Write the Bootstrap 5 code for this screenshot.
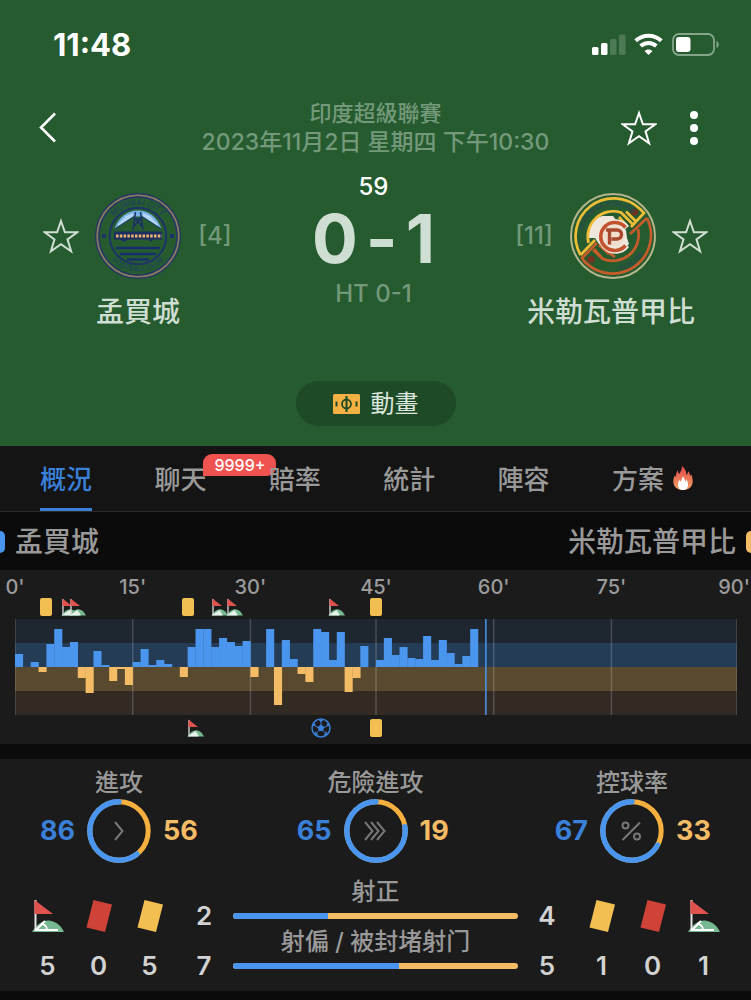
<!DOCTYPE html>
<html lang="zh-Hant" data-bs-theme="dark">
<head>
<meta charset="utf-8">
<meta name="viewport" content="width=device-width, initial-scale=1">
<title>孟買城 0-1 米勒瓦普甲比</title>
<link href="https://cdn.jsdelivr.net/npm/bootstrap@5.3.0/dist/css/bootstrap.min.css" rel="stylesheet">
<style>
:root{--pitch:#265b2f;--home:#4a96ee;--home-text:#3a7fd8;--away:#f5bc66;--panel:#1b1b1b;--muted:#999}
body{background:#0b0b0b;color:var(--muted);font-family:Inter,"Noto Sans CJK TC",sans-serif;font-size:24px;line-height:26px;font-weight:500;overflow-x:hidden}
svg{display:block;flex:none}
.plain{background:none;border:0;padding:0;color:inherit}
.match-head{background:var(--pitch);color:#cfded2;padding-bottom:20px}
.status{padding:27px 31px 0 53px;height:63px;color:#fff}
.clock{font-size:31px;font-weight:700}
.topbar{padding:0 52px 0 38px;margin-top:36px;color:#fff}
.nav-start{width:114px}
.nav-end{width:100px}
.league{color:#73997a;font-size:22px;line-height:29px}
.league time{font-size:23px}
.board{padding:0 43px;margin-top:15px}
.side{display:grid;justify-items:center;align-items:center;column-gap:16px;row-gap:16px;margin-top:21px}
.side-home{grid-template-columns:36px 86px 36px}
.side-away{grid-template-columns:40px 86px 36px}
.side h2{grid-column:1/-1;font-size:28px;line-height:34px;font-weight:500;margin:0;white-space:nowrap;color:#cfded2}
.rank{color:#73997a;font-size:24px}
.minute{font-size:24px;line-height:30px;color:#fff}
.score{font-size:68px;line-height:72px;font-weight:700;gap:8px}
.half{color:#73997a;font-size:24px;line-height:40px}
.anim{background:#1e4a27;color:#dbe6dd;border-radius:23px;width:160px;height:45px;margin-top:52px;gap:11px}
.tabs{background:#141414;border-bottom:1px solid #2b2b2b;padding:0 58px 0 40px}
.tabs a{color:var(--muted);font-size:26px;height:65px;padding-top:2px;text-decoration:none;gap:9px}
.tabs a.active{color:var(--home-text);box-shadow:inset 0 -3px var(--home-text)}
.count{left:49px;top:8px;width:73px;height:22px;line-height:22px;font-size:16px;background:#ef5350;color:#fff;border-radius:9px 9px 9px 0;text-align:center}
.legend-row{font-size:28px;height:58px;padding-top:2px}
.legend-row span{gap:10px}
.swatch{width:5px;height:22px}
.timeline{background:var(--panel);padding:4px 14px 0 15px;height:174px;overflow:hidden}
.lane{display:grid;grid-template-columns:repeat(92,minmax(0,1fr));align-items:center}
.lane>*{grid-row:1;width:0;display:flex;justify-content:center;white-space:nowrap}
.axis{height:24px;font-size:20px;color:#9b9b9b}
.axis>:last-child{justify-content:flex-end;margin-right:-13px}
.lane-top{height:18px}
.lane-bottom{height:26px}
.booking{width:12px;height:18px;border-radius:2px;background:#f3bf52;flex:none}
.plot{height:96px;width:100%;margin-top:3px}
.panel{background:var(--panel);margin-top:15px;padding-top:11px}
.dials{padding:0 39px}
.dial{width:160px}
.dial-row{display:grid;grid-template-columns:1fr 64px 1fr;column-gap:12px;align-items:center;font-size:27px;font-weight:700;margin-top:3px}
.h-num{color:var(--home-text)}
.a-num{color:var(--away)}
.tally{padding:0 22px;margin-top:16px;color:#d2d2d2}
.tcol{width:51px;font-size:26px;font-weight:600}
.tcol.wide{width:58px}
.tcol>*{height:50px;display:flex;align-items:center;justify-content:center}
.bars{color:var(--muted);text-align:center;padding-bottom:12px}
.progress{height:6px;border-radius:3px;background:var(--away);margin:8px 0 10px}
.progress-bar{background:var(--home)}
</style>
</head>
<body>
<svg width="0" height="0" class="position-absolute" aria-hidden="true">
  <symbol id="star" viewBox="0 0 36 36"><path d="M18 3l3.900 11.300h12.400l-9.800 7.100 3.600 11.900L18 26.200 7.900 33.300l3.600-11.900-9.800-7.100h12.400z" fill="none" stroke="currentColor" stroke-width="2"/></symbol>
  <symbol id="corner" viewBox="0 0 34 34"><path d="M1 33c5-8 12-13 19-11 6 1 11 6 13 11z" fill="#76b88f"/><path d="M4.500 1v31" stroke="#e3e3e3" stroke-width="2"/><path d="M3.500 1L22 15H3.500z" fill="#e0524d"/><path d="M4 31h23M5 31l9-9M10 25c4 0 6 3 6 6" fill="none" stroke="#fff" stroke-width="2"/></symbol>
  <symbol id="corner-sm" viewBox="0 0 17 18"><path d="M.5 17.500c3-5 7-7 10-6 3 .6 5 3 6.500 6z" fill="#76b88f"/><path d="M.5 17.500l8-5.500 3 4.500v1z" fill="#e6f2ea"/><path d="M2 1v16" stroke="#ddd" stroke-width="1.300"/><path d="M1.500 .5l9.500 7.500H1.500z" fill="#e0524d"/></symbol>
  <symbol id="tilted" viewBox="0 0 28 34"><path d="M8.500 1L27 5.500 20 33 1.500 28.500z" fill="currentColor"/></symbol>
</svg>

<header class="match-head">
  <div class="status d-flex align-items-center justify-content-between">
    <span class="clock">11:48</span>
    <svg width="129" height="26" viewBox="0 0 129 26" role="img" aria-label="訊號、Wi-Fi、電量">
      <g fill="#fff"><rect x="1" y="15" width="6.500" height="8" rx="1.500"/><rect x="10" y="11" width="6.500" height="12" rx="1.500"/><g opacity=".18"><rect x="19" y="7" width="6.500" height="16" rx="1.500"/><rect x="28" y="2.500" width="6.500" height="20.500" rx="1.500"/></g>
      <path d="M57.500 17.500c1.600 0 3 .6 4 1.500l-4 4-4-4c1-.9 2.400-1.500 4-1.500z"/></g>
      <path d="M44.700 8.800a18.500 18.500 0 0 1 25.600 0M49.700 14a11.500 11.500 0 0 1 15.600 0" fill="none" stroke="#fff" stroke-width="4"/>
      <rect x="82" y="2" width="41" height="21" rx="6" fill="none" stroke="#86a58b" stroke-width="1.800"/><rect x="85" y="5" width="14.500" height="15" rx="3" fill="#fff"/><path d="M125.500 9c3 1 3 6 0 7z" fill="#86a58b"/>
    </svg>
  </div>

  <div class="topbar d-flex align-items-center justify-content-between">
    <div class="nav-start d-flex"><button class="plain" type="button" aria-label="返回"><svg width="20" height="32" viewBox="0 0 20 32"><path d="M17 1.500L3 15.500l14 14" fill="none" stroke="#fff" stroke-width="2.600"/></svg></button></div>
    <p class="league text-center text-nowrap mb-0">印度超級聯賽<br><time datetime="2023-11-02T22:30">2023年11月2日 星期四 下午10:30</time></p>
    <div class="nav-end d-flex align-items-center justify-content-end">
      <button class="plain me-4 pe-1" type="button" aria-label="收藏比賽"><svg width="36" height="36"><use href="#star"/></svg></button>
      <button class="plain" type="button" aria-label="更多"><svg width="14" height="36" viewBox="0 0 14 36" fill="#fff"><circle cx="9" cy="5" r="4"/><circle cx="9" cy="18" r="4"/><circle cx="9" cy="31" r="4"/></svg></button>
    </div>
  </div>

  <div class="board d-flex justify-content-between align-items-start">
    <section class="side side-home">
      <button class="plain" type="button" aria-label="收藏孟買城"><svg width="36" height="36"><use href="#star"/></svg></button>
      <svg width="86" height="86" viewBox="0 0 86 86" role="img" aria-label="孟買城隊徽">
        <defs><path id="m-up" d="M12 43a31 31 0 0 1 62 0"/><path id="m-dn" d="M7.500 43a35.500 35.500 0 0 0 71 0"/></defs>
        <circle cx="43" cy="43" r="42.300" fill="none" stroke="#23366b" stroke-width="1.400"/><circle cx="43" cy="43" r="40.700" fill="none" stroke="#8d7862" stroke-width="1.800"/><circle cx="43" cy="43" r="39" fill="none" stroke="#23366b" stroke-width="1.400"/><circle cx="43" cy="43" r="28.300" fill="none" stroke="#1e3468" stroke-width="2"/>
        <g fill="#1f4458" font-size="8" font-weight="600"><text text-anchor="middle"><textPath href="#m-up" startOffset="50%">MUMBAI CITY</textPath></text><text font-size="7" text-anchor="middle"><textPath href="#m-dn" startOffset="50%">FOOTBALL CLUB</textPath></text></g>
        <path d="M7 41h4v4H7zM75 41h4v4h-4z" fill="#1c3167"/>
        <path d="M19.500 35.500C24 24 32 17.500 43 17.500s19 6.500 23.500 18L47 23.500h-8z" fill="#79b2e6"/><path d="M23 31l8-8 7-3v3L23 33zM63 31l-8-8-7-3v3l15 10z" fill="#b6d5ef"/>
        <path d="M38 37l2.500-18M48 37l-2.500-18M39.500 26h7M38 34l8-8M48 34l-8-8" fill="none" stroke="#1c3167" stroke-width="1.500"/><path d="M20 36l19-12.500M66 36L47 23.500" stroke="#1c3a62" stroke-width="1"/>
        <path d="M19 38.500h48v8H59l-3 2-3-2H32l-3 2.500-4-2.500h-6z" fill="#1c2f62"/><path d="M21 43h46" stroke="#efb56b" stroke-width="3" stroke-dasharray="2.500 1.300"/>
        <path d="M21 55h44M25 61h36M32 66.500h22" stroke="#17306b" stroke-width="2.600"/>
      </svg>
      <span class="rank">[4]</span>
      <h2>孟買城</h2>
    </section>

    <div class="text-center">
      <div class="minute">59</div>
      <div class="score d-flex justify-content-center"><span>0</span><span>-</span><span>1</span></div>
      <div class="half">HT 0-1</div>
    </div>

    <section class="side side-away">
      <span class="rank">[11]</span>
      <svg width="86" height="86" viewBox="0 0 86 86" role="img" aria-label="米勒瓦普甲比隊徽">
        <defs><path id="p-up" d="M13 43a30 30 0 0 1 60 0"/><path id="p-dn" d="M7.500 43a35.500 35.500 0 0 0 71 0"/></defs>
        <circle cx="43" cy="43" r="42" fill="none" stroke="#b3b58d" stroke-width="2"/>
        <path d="M19 38c1-8 6-13 13-15l11 0 6 8 7 6 1 8 2 6-5 5-11 2-12-4-6-9-6 0z" fill="#efe7dc"/>
        <g fill="none" stroke-width="2.700">
          <path d="M10.500 62A38 38 0 0 1 70 16l4 4L61 34M10.500 62L25 47M18.500 50A25.500 25.500 0 0 1 51 19.500l12 12M49 24l7 8M56 18.500l10 10" stroke="#efbd38"/>
          <path d="M77 25A38.500 38.500 0 0 1 15 69l-3-4 15-15M77 25L60 41M68 36A26 26 0 0 1 33 66l-10-9M29 52l10 9M24 56l9 10M35 57l10 7" stroke="#c75c2b"/>
        </g>
        <path d="M56.500 35A14 14 0 1 0 56.500 52" fill="none" stroke="#efe7dc" stroke-width="6.500"/>
        <path d="M55.500 34.500A14 14 0 1 0 55.500 52.500" fill="none" stroke="#c3522f" stroke-width="3.600"/>
        <circle cx="44" cy="43" r="10.500" fill="#f0dfcd"/>
        <path d="M39.500 51.500V37H47a4.500 4.500 0 0 1 0 9h-5.500M36 37h6" fill="none" stroke="#a8482f" stroke-width="3.400"/>
        <circle cx="64.500" cy="19" r="3.600" fill="#75321f"/><circle cx="21" cy="66.500" r="3.600" fill="#75321f"/>
        <g fill="#284b49" font-size="7" font-weight="700"><text text-anchor="middle"><textPath href="#p-up" startOffset="40%">MINERVA PUNJAB</textPath></text><text text-anchor="middle"><textPath href="#p-dn" startOffset="70%">PUNJAB</textPath></text></g>
      </svg>
      <button class="plain" type="button" aria-label="收藏米勒瓦普甲比"><svg width="36" height="36"><use href="#star"/></svg></button>
      <h2>米勒瓦普甲比</h2>
    </section>
  </div>

  <button class="plain anim d-flex align-items-center justify-content-center mx-auto" type="button">
    <svg width="27" height="20" viewBox="0 0 27 20"><rect width="27" height="20" rx="1.500" fill="#f3b043"/><path d="M3.500 7.500v5M23.500 7.500v5M13.500 2v16" stroke="#1e4a27" stroke-width="2"/><circle cx="13.500" cy="10" r="4.500" fill="none" stroke="#1e4a27" stroke-width="1.800"/></svg>動畫
  </button>
</header>

<nav class="tabs d-flex justify-content-between" aria-label="比賽資訊">
  <a class="active position-relative d-flex align-items-center" href="#overview" aria-current="page">概況</a>
  <a class="position-relative d-flex align-items-center" href="#chat">聊天<span class="count position-absolute">9999+</span></a>
  <a class="position-relative d-flex align-items-center" href="#odds">賠率</a>
  <a class="position-relative d-flex align-items-center" href="#stats">統計</a>
  <a class="position-relative d-flex align-items-center" href="#lineup">陣容</a>
  <a class="position-relative d-flex align-items-center" href="#plans">方案<svg class="mb-1" width="20" height="24" viewBox="0 0 20 24"><defs><linearGradient id="fire" x2="0" y2="1"><stop stop-color="#e5484b"/><stop offset="1" stop-color="#f0a064"/></linearGradient></defs><path d="M9 0c3 2.500 4.500 5.500 4.500 9 1-1 1.500-2 1.500-4 2 2 2 4 2.300 5 .7-.5 1-1 1-2 1 2.500 1.400 5 1.400 7.500 0 5-4 8.500-9.700 8.500S.3 20.500.3 15.500C.3 13 1 11 2 9c.3 1 .4 1.500 1 2 0-3 .5-5 2-7 0 2 .3 3 1 4C7.500 6 9 4 9 0z" fill="url(#fire)"/><path d="M10 10.500c1.800 2 2 3.500 2 5.500l1.500-2.500c1.500 2 1.500 4 1.500 5.500 0 3-2 5-5 5s-5-2-5-5c0-2 .3-3.500 1.500-5L8 16c0-2 1-3.500 2-5.500z" fill="#fff"/></svg></a>
</nav>

<main id="overview">
  <div class="legend-row d-flex align-items-center justify-content-between">
    <span class="d-flex align-items-center"><i class="swatch rounded-end" style="background:var(--home)"></i>孟買城</span>
    <span class="d-flex align-items-center">米勒瓦普甲比<i class="swatch rounded-start" style="background:var(--away)"></i></span>
  </div>

  <section class="timeline" aria-label="進攻走勢">
    <div class="lane axis" id="axis"></div>
    <div class="lane lane-top" id="evHome"></div>
    <svg class="plot" id="plot" viewBox="0 0 92 96" preserveAspectRatio="none" role="img" aria-label="每分鐘進攻"></svg>
    <div class="lane lane-bottom" id="evAway"></div>
  </section>

  <section class="panel" id="stats">
    <div class="dials d-flex justify-content-between text-center">
      <div class="dial"><div>進攻</div><div class="dial-row"><span class="h-num text-end">86</span>
        <svg width="64" height="64" viewBox="0 0 64 64" data-home="86" data-away="56"><path d="M28 23l7.500 9-7.500 9" fill="none" stroke="#777" stroke-width="2"/></svg><span class="a-num text-start">56</span></div></div>
      <div class="dial"><div>危險進攻</div><div class="dial-row"><span class="h-num text-end">65</span>
        <svg width="64" height="64" viewBox="0 0 64 64" data-home="65" data-away="19"><path d="M21 23l7.500 9-7.500 9M27 23l7.500 9-7.500 9M33 23l7.500 9-7.500 9" fill="none" stroke="#777" stroke-width="2"/></svg><span class="a-num text-start">19</span></div></div>
      <div class="dial"><div>控球率</div><div class="dial-row"><span class="h-num text-end">67</span>
        <svg width="64" height="64" viewBox="0 0 64 64" data-home="67" data-away="33"><g fill="none" stroke="#777" stroke-width="2"><path d="M40 23.500L22.500 41"/><circle cx="25.500" cy="26.500" r="3"/><circle cx="37" cy="37.500" r="3"/></g></svg><span class="a-num text-start">33</span></div></div>
    </div>

    <div class="tally d-flex align-items-end">
      <div class="tcol"><span><svg width="34" height="34" role="img" aria-label="角球"><use href="#corner"/></svg></span><span>5</span></div>
      <div class="tcol"><span><svg width="28" height="34" color="#cf4238" role="img" aria-label="紅牌"><use href="#tilted"/></svg></span><span>0</span></div>
      <div class="tcol"><span><svg width="28" height="34" color="#f3bf52" role="img" aria-label="黃牌"><use href="#tilted"/></svg></span><span>5</span></div>
      <div class="tcol wide"><span>2</span><span>7</span></div>
      <div class="bars flex-fill">
        <div>射正</div>
        <div class="progress" role="progressbar" aria-label="射正" aria-valuenow="2" aria-valuemin="0" aria-valuemax="6"><div class="progress-bar" style="width:33.300%"></div></div>
        <div>射偏 / 被封堵射门</div>
        <div class="progress" role="progressbar" aria-label="射偏" aria-valuenow="7" aria-valuemin="0" aria-valuemax="12"><div class="progress-bar" style="width:58.300%"></div></div>
      </div>
      <div class="tcol wide"><span>4</span><span>5</span></div>
      <div class="tcol"><span><svg width="28" height="34" color="#f3bf52" role="img" aria-label="黃牌"><use href="#tilted"/></svg></span><span>1</span></div>
      <div class="tcol"><span><svg width="28" height="34" color="#cf4238" role="img" aria-label="紅牌"><use href="#tilted"/></svg></span><span>0</span></div>
      <div class="tcol"><span><svg width="34" height="34" role="img" aria-label="角球"><use href="#corner"/></svg></span><span>1</span></div>
    </div>
  </section>
</main>

<script src="https://cdn.jsdelivr.net/npm/bootstrap@5.3.0/dist/js/bootstrap.bundle.min.js"></script>
<script>
// The time axis has 92 one-minute slots: 46 per half, stoppage included.
const pressure = [13,0,5,-5,23,38,20,25,-11,-26,16,2,-14,-2,-18,5,18,2,7,3,0,-10,20,38,38,20,29,25,21,26,
  -10,0,38,-38,27,8,-7,-15,38,35,7,35,-25,-11,21,0,7,29,12,20,9,8,31,7,27,14,3,11,38];
const slots = [0,15,30,46,61,76,92];
const rect = (x,y,w,h,f) => `<rect x="${x}" y="${y}" width="${w}" height="${h}" fill="${f}"/>`;
let out = rect(0,0,92,24,'#1e262f') + rect(0,24,92,24,'#243c55') + rect(0,48,92,24,'#594a2f') + rect(0,72,92,24,'#332a24');
const vline = (x,c,w) => `<path d="M${x} 0V96" stroke="${c}" stroke-width="${w}" vector-effect="non-scaling-stroke"/>`;
slots.forEach(s => out += vline(s,'rgba(255,255,255,.18)',1.5));
pressure.forEach((v,i) => { if (v) out += rect(i, v > 0 ? 48 - v : 48, 1.03, Math.abs(v), v > 0 ? '#4a96ee' : '#f5bc66'); });
out += vline(60,'#4a96ee',1.5);
document.getElementById('plot').innerHTML = out;

const place = (slot, html) => slot > 91
  ? `<span style="grid-column:92;justify-self:end">${html}</span>`
  : `<span style="grid-column:${slot + 1}">${html}</span>`;
document.getElementById('axis').innerHTML = slots.map((s,i) => place(s, i * 15 + "'")).join('');
const icon = {
  card: '<i class="booking"></i>',
  corner: '<svg width="17" height="18"><use href="#corner-sm"/></svg>',
  goal: '<svg width="20" height="20" viewBox="0 0 20 20"><circle cx="10" cy="10" r="9" fill="none" stroke="#3a7fd8" stroke-width="1.500"/><path d="M10 6.500l3.400 2.500-1.300 4H7.900L6.600 9zM7 1.500h6L10 4zM1 8.500l1.500-4L5 7zM19 8.500l-1.500-4L15 7zM4 16.500l.5-3.500 3 4.500zM16 16.500l-.5-3.500-3 4.500z" fill="#3a7fd8"/><path d="M10 2v5M2 7l5 2.500M18 7l-5 2.500M5 16l3-3.500M15 16l-3-3.500" stroke="#3a7fd8"/></svg>'
};
const lane = (id, events) => document.getElementById(id).innerHTML = events.map(([s,k]) => place(s, icon[k])).join('');
lane('evHome', [[4,'card'],[7,'corner'],[8,'corner'],[22,'card'],[26,'corner'],[28,'corner'],[41,'corner'],[46,'card']]);
lane('evAway', [[23,'corner'],[39,'goal'],[46,'card']]);

// Rings: away share runs clockwise from the top, home share the other way.
document.querySelectorAll('svg[data-home]').forEach(s => {
  const h = +s.dataset.home, a = +s.dataset.away, p = 100 * h / (h + a);
  s.insertAdjacentHTML('afterbegin', `<circle cx="32" cy="32" r="29.200" fill="none" stroke="#f6b03f" stroke-width="5"/>
    <circle cx="32" cy="32" r="29.200" fill="none" stroke="#4a96ee" stroke-width="5.400" stroke-linecap="round" pathLength="100" stroke-dasharray="${p} 100" transform="matrix(-1 0 0 1 64 0) rotate(-90 32 32)"/>`);
});
</script>
</body>
</html>
